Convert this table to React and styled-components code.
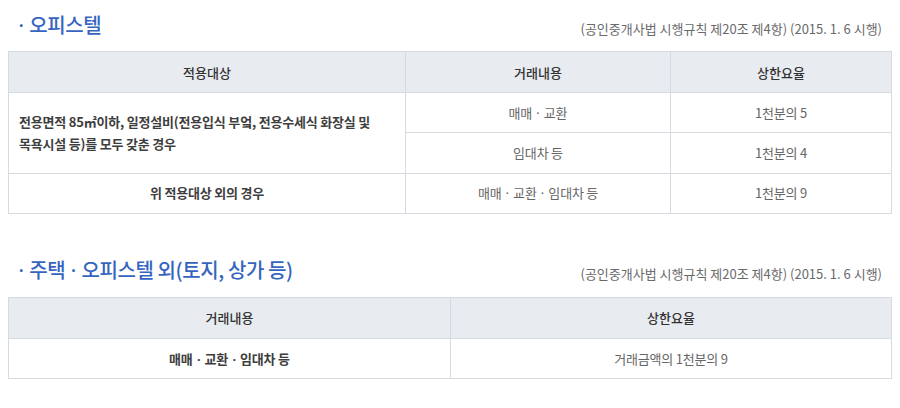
import React from "react";
import styled, { createGlobalStyle } from "styled-components";

const Global = createGlobalStyle`
  html, body { margin: 0; padding: 0; background: #fff; }
  body { font-family: "Noto Sans CJK KR", "Noto Sans", sans-serif; color: #555; }
  * { box-sizing: border-box; }
`;

const Page = styled.div`
  width: 900px;
  padding: 12px 9px 0 8px;
`;

const Section = styled.section`
  margin-bottom: ${(p) => p.$mb || 0}px;
`;

const TitleRow = styled.div`
  display: flex;
  justify-content: space-between;
  align-items: flex-end;
  padding: 0 9px 0 9px;
  margin-bottom: ${(p) => p.$mb || 10}px;
`;

const Title = styled.h2`
  margin: 0;
  font-size: 20px;
  line-height: 26px;
  font-weight: 500;
  color: #3565c0;
  letter-spacing: -0.4px;
`;

const Note = styled.span`
  font-size: 13px;
  line-height: 20px;
  color: #6a6a6a;
  letter-spacing: 0;
`;

const Dot = styled.span`
  font-family: "Noto Sans", "Liberation Sans", sans-serif;
  margin: 0 1.5px;
`;

const Table = styled.table`
  width: 883px;
  border-collapse: collapse;
  table-layout: fixed;
  border: 1px solid #d6dae1;
`;

const Th = styled.th`
  height: 41px;
  background: #e8ebf0;
  border: 1px solid #d6dae1;
  font-size: 13px;
  font-weight: 500;
  color: #333;
  text-align: center;
  padding: 0;
`;

const Td = styled.td`
  height: 40.33px;
  border: 1px solid #d6dae1;
  font-size: 13px;
  line-height: 22px;
  color: ${(p) => (p.$bold ? "#3e3e3e" : "#666")};
  font-weight: ${(p) => (p.$bold ? 700 : 400)};
  text-align: ${(p) => (p.$left ? "left" : "center")};
  padding: ${(p) => (p.$left ? "0 10px" : "0")};
  letter-spacing: -0.2px;
`;

const D = () => <Dot>·</Dot>;

const NOTE = "(공인중개사법 시행규칙 제20조 제4항) (2015. 1. 6 시행)";

export default function App() {
  return (
    <>
      <Global />
      <Page>
        <Section $mb={43}>
          <TitleRow $mb={12}>
            <Title>
              <D /> 오피스텔
            </Title>
            <Note>{NOTE}</Note>
          </TitleRow>
          <Table>
            <colgroup>
              <col style={{ width: 397 }} />
              <col style={{ width: 265 }} />
              <col style={{ width: 221 }} />
            </colgroup>
            <thead>
              <tr>
                <Th>적용대상</Th>
                <Th>거래내용</Th>
                <Th>상한요율</Th>
              </tr>
            </thead>
            <tbody>
              <tr>
                <Td $bold $left rowSpan={2}>
                  전용면적 85㎡이하, 일정설비(전용입식 부엌, 전용수세식 화장실 및
                  <br />
                  목욕시설 등)를 모두 갖춘 경우
                </Td>
                <Td>
                  매매 <D /> 교환
                </Td>
                <Td>1천분의 5</Td>
              </tr>
              <tr>
                <Td>임대차 등</Td>
                <Td>1천분의 4</Td>
              </tr>
              <tr>
                <Td $bold>위 적용대상 외의 경우</Td>
                <Td>
                  매매 <D /> 교환 <D /> 임대차 등
                </Td>
                <Td>1천분의 9</Td>
              </tr>
            </tbody>
          </Table>
        </Section>
        <Section>
          <TitleRow $mb={13}>
            <Title>
              <D /> 주택 <D /> 오피스텔 외(토지, 상가 등)
            </Title>
            <Note>{NOTE}</Note>
          </TitleRow>
          <Table>
            <colgroup>
              <col style={{ width: 442 }} />
              <col style={{ width: 441 }} />
            </colgroup>
            <thead>
              <tr>
                <Th>거래내용</Th>
                <Th>상한요율</Th>
              </tr>
            </thead>
            <tbody>
              <tr>
                <Td $bold>
                  매매 <D /> 교환 <D /> 임대차 등
                </Td>
                <Td>거래금액의 1천분의 9</Td>
              </tr>
            </tbody>
          </Table>
        </Section>
      </Page>
    </>
  );
}
